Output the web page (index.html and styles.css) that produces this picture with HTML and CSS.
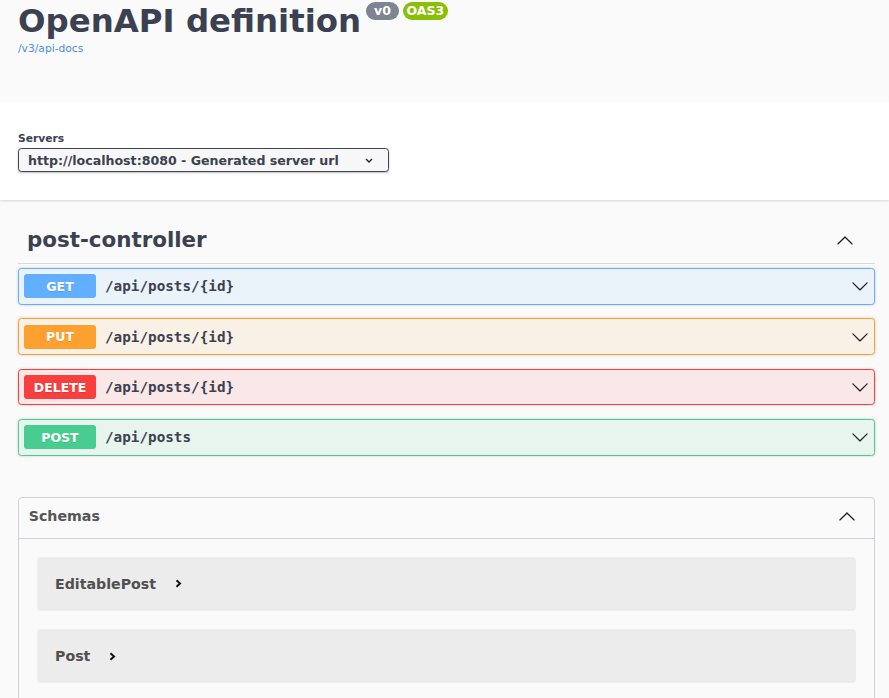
FILE: index.html
```html
<!DOCTYPE html>
<html lang="en">
<head>
<meta charset="utf-8">
<title>Swagger UI</title>
<link rel="stylesheet" href="styles.css">
</head>
<body>
<div class="info">
  <div class="title-row">
    <h1 class="title">OpenAPI definition</h1>
    <span class="badge badge-version">v0</span>
    <span class="badge badge-oas">OAS3</span>
  </div>
  <a class="spec-link" href="#">/v3/api-docs</a>
</div>

<div class="scheme-container">
  <label class="servers-label">Servers</label>
  <div class="select">
    <span class="select-text">http://localhost:8080 - Generated server url</span>
    <svg class="select-arrow" width="8" height="5" viewBox="0 0 8 5"><polyline points="1,1 4,4 7,1" fill="none" stroke="#222" stroke-width="1.4"/></svg>
  </div>
</div>

<main class="main">
  <section class="tag-section">
    <h3 class="tag">
      <span class="tag-name">post-controller</span>
      <svg class="arrow" width="18" height="18" viewBox="0 0 20 20"><path d="M17.418 14.908c.272.268.709.268.979 0s.271-.701 0-.969l-7.908-7.83c-.27-.268-.707-.268-.979 0l-7.908 7.83c-.27.268-.27.701 0 .969.271.268.709.268.979 0L10 7.767l7.418 7.141z" fill="#222"/></svg>
    </h3>
    <div class="ops">
      <div class="op op-get">
        <span class="method">GET</span>
        <span class="path">/api/posts/{id}</span>
        <svg class="arrow" width="18" height="18" viewBox="0 0 20 20"><path d="M17.418 6.109c.272-.268.709-.268.979 0s.271.701 0 .969l-7.908 7.83c-.27.268-.707.268-.979 0l-7.908-7.83c-.27-.268-.27-.701 0-.969.271-.268.709-.268.979 0L10 13.25l7.418-7.141z" fill="#222"/></svg>
      </div>
      <div class="op op-put">
        <span class="method">PUT</span>
        <span class="path">/api/posts/{id}</span>
        <svg class="arrow" width="18" height="18" viewBox="0 0 20 20"><path d="M17.418 6.109c.272-.268.709-.268.979 0s.271.701 0 .969l-7.908 7.83c-.27.268-.707.268-.979 0l-7.908-7.83c-.27-.268-.27-.701 0-.969.271-.268.709-.268.979 0L10 13.25l7.418-7.141z" fill="#222"/></svg>
      </div>
      <div class="op op-delete">
        <span class="method">DELETE</span>
        <span class="path">/api/posts/{id}</span>
        <svg class="arrow" width="18" height="18" viewBox="0 0 20 20"><path d="M17.418 6.109c.272-.268.709-.268.979 0s.271.701 0 .969l-7.908 7.83c-.27.268-.707.268-.979 0l-7.908-7.83c-.27-.268-.27-.701 0-.969.271-.268.709-.268.979 0L10 13.25l7.418-7.141z" fill="#222"/></svg>
      </div>
      <div class="op op-post">
        <span class="method">POST</span>
        <span class="path">/api/posts</span>
        <svg class="arrow" width="18" height="18" viewBox="0 0 20 20"><path d="M17.418 6.109c.272-.268.709-.268.979 0s.271.701 0 .969l-7.908 7.83c-.27.268-.707.268-.979 0l-7.908-7.83c-.27-.268-.27-.701 0-.969.271-.268.709-.268.979 0L10 13.25l7.418-7.141z" fill="#222"/></svg>
      </div>
    </div>
  </section>

  <section class="models">
    <h4 class="models-header">
      <span>Schemas</span>
      <svg class="arrow" width="18" height="18" viewBox="0 0 20 20"><path d="M17.418 14.908c.272.268.709.268.979 0s.271-.701 0-.969l-7.908-7.83c-.27-.268-.707-.268-.979 0l-7.908 7.83c-.27.268-.27.701 0 .969.271.268.709.268.979 0L10 7.767l7.418 7.141z" fill="#222"/></svg>
    </h4>
    <div class="models-content">
      <div class="model">
        <span class="model-name">EditablePost</span>
        <svg class="model-arrow" width="7" height="9" viewBox="0 0 7 9"><polyline points="1.5,1.2 5,4.5 1.5,7.8" fill="none" stroke="#111" stroke-width="2"/></svg>
      </div>
      <div class="model">
        <span class="model-name">Post</span>
        <svg class="model-arrow" width="7" height="9" viewBox="0 0 7 9"><polyline points="1.5,1.2 5,4.5 1.5,7.8" fill="none" stroke="#111" stroke-width="2"/></svg>
      </div>
    </div>
  </section>
</main>
</body>
</html>
```

FILE: styles.css
```css
html, body {
  margin: 0;
  padding: 0;
}

body {
  background: #fafafa;
  font-family: "DejaVu Sans", "Noto Sans", sans-serif;
  color: #3b4151;
}

.info {
  box-sizing: border-box;
  height: 102px;
  padding: 3px 18px 0;
}

.title-row {
  display: flex;
  align-items: flex-start;
}

.title {
  margin: 0;
  font-size: 32.4px;
  line-height: 36px;
  font-weight: bold;
  color: #3b4151;
}

.badge {
  display: inline-block;
  height: 18px;
  line-height: 18px;
  margin-top: -1px;
  border-radius: 9px;
  color: #fff;
  font-size: 12.5px;
  font-weight: bold;
}

.badge-version {
  margin-left: 5px;
  padding: 0 8px;
  background: #7d8492;
}

.badge-oas {
  margin-left: 4px;
  padding: 0 3.5px;
  background: #89bf04;
}

.spec-link {
  display: block;
  margin-top: 3px;
  font-size: 10.7px;
  line-height: 13px;
  color: #4990e2;
  text-decoration: none;
}

.scheme-container {
  background: #fff;
  box-shadow: 0 1px 2px 0 rgba(0, 0, 0, 0.15);
  padding: 31px 18px 28px;
}

.servers-label {
  display: block;
  font-size: 10.7px;
  line-height: 12px;
  font-weight: bold;
  color: #3b4151;
  margin-bottom: 3px;
}

.select {
  box-sizing: border-box;
  width: 371px;
  height: 24px;
  display: flex;
  align-items: center;
  justify-content: space-between;
  padding: 0 15px 0 9px;
  border: 1px solid #41444e;
  border-radius: 3.5px;
  background: #f7f7f7;
  box-shadow: 0 1px 2px 0 rgba(0, 0, 0, 0.25);
}

.select-text {
  font-size: 12.6px;
  font-weight: bold;
  color: #3b4151;
}

.main {
  display: flex;
  flex-direction: column;
  padding: 0 14px 0 18px;
}

.tag-section {
  margin-top: 16px;
}

.tag {
  box-sizing: border-box;
  height: 48px;
  margin: 0;
  display: flex;
  align-items: center;
  justify-content: space-between;
  padding: 0 21px 0 9px;
  border-bottom: 1px solid #d8d9dc;
  font-size: 21.4px;
  font-weight: bold;
  color: #3b4151;
}

.arrow {
  display: block;
  flex: none;
}

.ops {
  display: flex;
  flex-direction: column;
  gap: 13.8px;
  padding-top: 4px;
}

.op {
  box-sizing: border-box;
  height: 36.6px;
  display: flex;
  align-items: center;
  padding: 0 5px;
  border: 1px solid;
  border-radius: 3.5px;
  box-shadow: 0 0 3px rgba(0, 0, 0, 0.19);
}

.method {
  flex: none;
  width: 72px;
  height: 24px;
  display: flex;
  align-items: center;
  justify-content: center;
  border-radius: 3px;
  color: #fff;
  font-size: 12.5px;
  font-weight: bold;
  text-shadow: 0 1px 0 rgba(0, 0, 0, 0.1);
}

.path {
  flex: 1;
  padding-left: 9px;
  font-family: "DejaVu Sans Mono", "Liberation Mono", monospace;
  font-size: 14.3px;
  font-weight: bold;
  color: #3b4151;
}

.op-get { background: #ebf3fa; border-color: #61affe; }
.op-get .method { background: #61affe; }
.op-put { background: #faf1e6; border-color: #fca130; }
.op-put .method { background: #fca130; }
.op-delete { background: #fae7e7; border-color: #f93e3e; }
.op-delete .method { background: #f93e3e; }
.op-post { background: #e8f5ef; border-color: #49cc90; }
.op-post .method { background: #49cc90; }

.models {
  margin-top: 41.2px;
  border: 1px solid #cfd0d5;
  border-radius: 4px;
}

.models-header {
  box-sizing: border-box;
  height: 41px;
  margin: 0;
  display: flex;
  align-items: center;
  justify-content: space-between;
  padding: 0 18px 3px 9.7px;
  border-bottom: 1px solid #cfd0d5;
  font-size: 14.2px;
  font-weight: bold;
  color: #555;
}

.models-content {
  display: flex;
  flex-direction: column;
  gap: 18.3px;
  padding: 18px 18px 18px;
}

.model {
  height: 54px;
  display: flex;
  align-items: center;
  padding-left: 18px;
  background: #ececec;
  border-radius: 4px;
}

.model-name {
  font-size: 14.2px;
  font-weight: bold;
  color: #505050;
}

.model-arrow {
  display: block;
  margin-left: 19px;
}
```
